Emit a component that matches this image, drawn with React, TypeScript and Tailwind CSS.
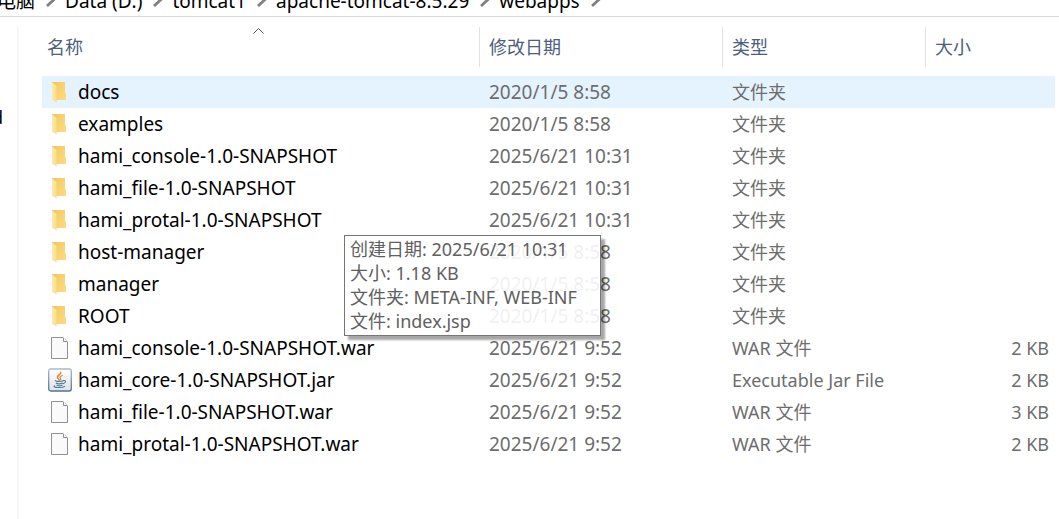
import React from 'react';

type Kind = 'folder' | 'file' | 'jar';

interface Entry {
  name: string;
  date: string;
  type: string;
  size?: string;
  kind: Kind;
}

const entries: Entry[] = [
  { name: 'docs', date: '2020/1/5 8:58', type: '文件夹', kind: 'folder' },
  { name: 'examples', date: '2020/1/5 8:58', type: '文件夹', kind: 'folder' },
  { name: 'hami_console-1.0-SNAPSHOT', date: '2025/6/21 10:31', type: '文件夹', kind: 'folder' },
  { name: 'hami_file-1.0-SNAPSHOT', date: '2025/6/21 10:31', type: '文件夹', kind: 'folder' },
  { name: 'hami_protal-1.0-SNAPSHOT', date: '2025/6/21 10:31', type: '文件夹', kind: 'folder' },
  { name: 'host-manager', date: '2020/1/5 8:58', type: '文件夹', kind: 'folder' },
  { name: 'manager', date: '2020/1/5 8:58', type: '文件夹', kind: 'folder' },
  { name: 'ROOT', date: '2020/1/5 8:58', type: '文件夹', kind: 'folder' },
  { name: 'hami_console-1.0-SNAPSHOT.war', date: '2025/6/21 9:52', type: 'WAR 文件', size: '2 KB', kind: 'file' },
  { name: 'hami_core-1.0-SNAPSHOT.jar', date: '2025/6/21 9:52', type: 'Executable Jar File', size: '2 KB', kind: 'jar' },
  { name: 'hami_file-1.0-SNAPSHOT.war', date: '2025/6/21 9:52', type: 'WAR 文件', size: '3 KB', kind: 'file' },
  { name: 'hami_protal-1.0-SNAPSHOT.war', date: '2025/6/21 9:52', type: 'WAR 文件', size: '2 KB', kind: 'file' },
];

const crumbs = ['此电脑', 'Data (D:)', 'tomcat1', 'apache-tomcat-8.5.29', 'webapps'];

function FolderIcon() {
  return (
    <svg width="24" height="24" viewBox="0 0 24 24" aria-hidden="true">
      <defs>
        <linearGradient id="folderBack" x1="0" y1="0" x2="1" y2="1">
          <stop offset="0" stopColor="#f0c75f" />
          <stop offset="1" stopColor="#fcdc80" />
        </linearGradient>
        <linearGradient id="folderFront" x1="0" y1="0" x2="1" y2="0">
          <stop offset="0" stopColor="#ffeaa8" />
          <stop offset="1" stopColor="#fbdc8c" />
        </linearGradient>
      </defs>
      <path d="M4 2H17V13L18 14V20H4Z" fill="url(#folderBack)" />
      <path d="M4 2.2L8.6 6V22.8L4 19.5Z" fill="url(#folderFront)" />
    </svg>
  );
}

function FileIcon() {
  return (
    <svg width="24" height="24" viewBox="0 0 24 24" aria-hidden="true">
      <path d="M3.5 1.5H15L19.5 6V22.5H3.5Z" fill="#fafafa" stroke="#929292" />
      <path d="M15.5 1.8V5.5H19.3" fill="#ffffff" stroke="#929292" />
    </svg>
  );
}

function JarIcon() {
  return (
    <svg width="24" height="24" viewBox="0 0 24 24" aria-hidden="true">
      <defs>
        <linearGradient id="jarEdge" x1="0" y1="0" x2="0" y2="1">
          <stop offset="0" stopColor="#a5bbcc" />
          <stop offset="1" stopColor="#4f7490" />
        </linearGradient>
        <linearGradient id="jarFace" x1="0" y1="0" x2="0" y2="1">
          <stop offset="0" stopColor="#ffffff" />
          <stop offset="1" stopColor="#dfe2e6" />
        </linearGradient>
      </defs>
      <rect x="0.7" y="1" width="22.6" height="22" rx="2" fill="url(#jarFace)" stroke="url(#jarEdge)" strokeWidth="1.3" />
      <g fill="none" strokeLinecap="round">
        <path d="M12.8 4.2C13.5 6.5 8.2 7.4 9.6 9.8C10 10.6 11 11 11.2 12" stroke="#ef7d22" strokeWidth="1.4" />
        <path d="M14.4 7.6C12.2 8.4 11.5 9.1 12.5 10.2C13 10.9 12.6 11.4 12.2 11.8" stroke="#ef7d22" strokeWidth="1.1" />
        <path d="M7.4 12.7C7.6 13.7 13.8 13.6 15 12.8" stroke="#4f7d9f" strokeWidth="1.2" />
        <path d="M15.4 12.6C18.3 12.1 18.2 14.7 15.2 15.7" stroke="#4f7d9f" strokeWidth="1.1" />
        <path d="M8.4 15.2C9.8 15.9 12.8 15.9 14.4 15.2" stroke="#4f7d9f" strokeWidth="1.3" />
        <path d="M9 17.2C10.2 17.8 12.7 17.8 14 17.2" stroke="#4f7d9f" strokeWidth="1.2" />
        <path d="M6.6 17.8C3.5 19.5 14.5 20.3 16.6 18.4" stroke="#4f7d9f" strokeWidth="1.1" />
      </g>
    </svg>
  );
}

const icons: Record<Kind, () => React.ReactElement> = {
  folder: FolderIcon,
  file: FileIcon,
  jar: JarIcon,
};

function Chevron() {
  return (
    <svg className="mx-[9px] shrink-0" width="12" height="24" viewBox="0 0 12 24" fill="none" stroke="#808080" strokeWidth="2.8" aria-hidden="true">
      <path d="M3 5L9.5 11L3 17" />
    </svg>
  );
}

function HeaderCell({ label, last, sorted }: { label: string; last?: boolean; sorted?: boolean }) {
  return (
    <th scope="col" className="relative p-0 text-left align-top font-normal">
      <button
        type="button"
        className={`mb-[9px] flex h-10 w-full items-center text-left ${sorted ? 'pl-[5px]' : 'pl-[9px]'} ${last ? '' : 'border-r border-[#e2e2e2]'}`}
      >
        {label}
      </button>
      {sorted && (
        <svg className="absolute top-0 left-1/2 -ml-2" width="12" height="8" viewBox="0 0 12 8" fill="none" stroke="#555555" aria-hidden="true">
          <path d="M0.5 6.5L5.5 1.5L10.5 6.5" />
        </svg>
      )}
    </th>
  );
}

export default function App() {
  return (
    <div className="flex min-h-screen flex-col overflow-hidden bg-white font-['Noto_Sans','Noto_Sans_CJK_SC',sans-serif] text-[18px] leading-6 text-[#6d6d6d]">
      <nav aria-label="路径" className="flex h-[17px] items-end overflow-hidden border-b border-[#d9d9d9] pb-[3px] text-[19px] text-black">
        <ol className="-ml-[22px] flex whitespace-nowrap">
          {crumbs.map((crumb) => (
            <li key={crumb} className="flex">
              <a href="#">{crumb}</a>
              <Chevron />
            </li>
          ))}
        </ol>
      </nav>

      <div className="flex flex-1 pt-[10px]">
        <aside className="w-[19px] shrink-0 border-r-2 border-[#f5f5f5] pt-[78px] text-black">
          <div className="flex w-[3px] justify-end overflow-hidden">d</div>
        </aside>

        <main className="relative min-w-0 flex-1 pr-1 pl-[23px]">
          <table className="w-full table-fixed border-collapse">
            <colgroup>
              <col className="w-[438px]" />
              <col className="w-[243px]" />
              <col className="w-[203px]" />
              <col />
            </colgroup>
            <thead className="text-[#4c607a]">
              <tr>
                <HeaderCell label="名称" sorted />
                <HeaderCell label="修改日期" />
                <HeaderCell label="类型" />
                <HeaderCell label="大小" last />
              </tr>
            </thead>
            <tbody>
              {entries.map((entry, index) => {
                const Icon = icons[entry.kind];
                return (
                  <tr key={entry.name} className={`h-8 whitespace-nowrap ${index === 0 ? 'bg-[#e5f3ff]' : ''}`}>
                    <td className="p-0 pl-[6px]">
                      <div className="flex items-center gap-[6px] text-[19px] text-black">
                        <Icon />
                        <span>{entry.name}</span>
                      </div>
                    </td>
                    <td className="p-0 pl-[9px] text-[19px]">{entry.date}</td>
                    <td className="p-0 pl-[9px]">{entry.type}</td>
                    <td className="p-0 pr-[6px] text-right">{entry.size}</td>
                  </tr>
                );
              })}
            </tbody>
          </table>

          <div
            role="tooltip"
            className="absolute top-[208px] left-[325px] w-[257px] border border-[#767676] bg-white/90 pt-px pb-[2px] pl-[5px] whitespace-nowrap text-[#606060] shadow-[4px_4px_2px_rgba(0,0,0,0.35)]"
          >
            <p>创建日期: 2025/6/21 10:31</p>
            <p>大小: 1.18 KB</p>
            <p>文件夹: META-INF, WEB-INF</p>
            <p>文件: index.jsp</p>
          </div>
        </main>
      </div>
    </div>
  );
}
